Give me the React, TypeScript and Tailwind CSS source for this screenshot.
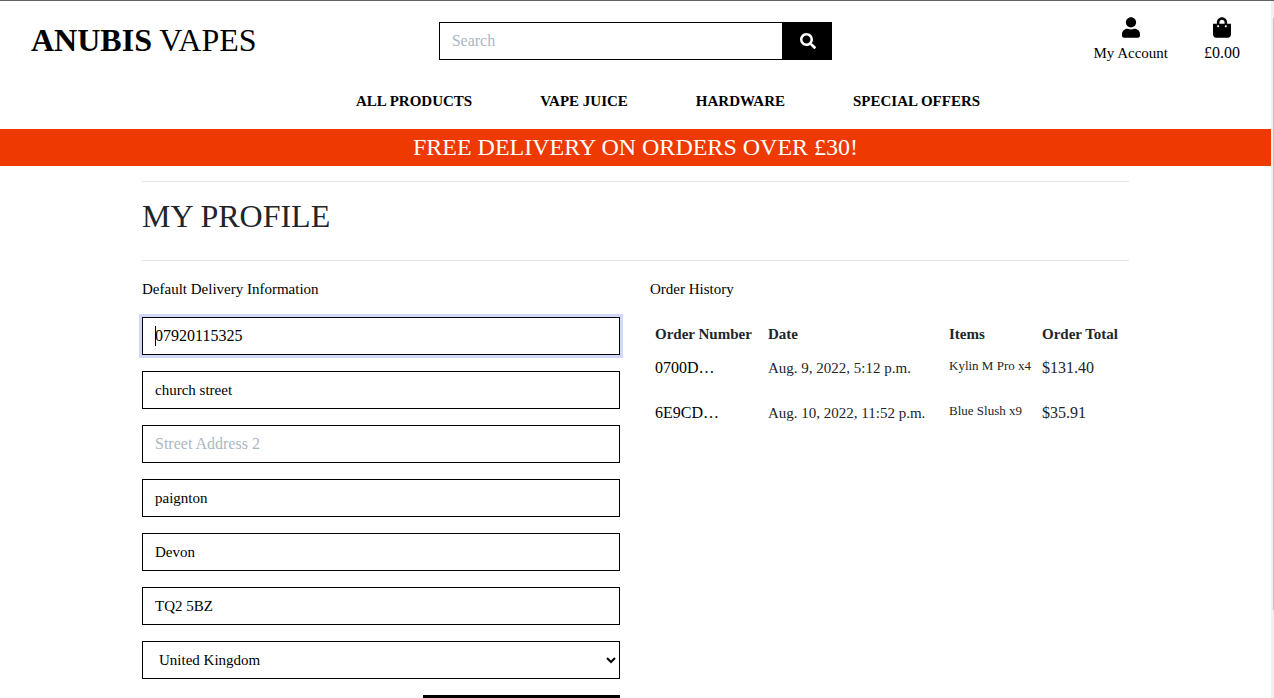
import { useState } from "react";
import { FaSearch, FaShoppingBag, FaUser } from "react-icons/fa";

const navLinks = ["All Products", "Vape Juice", "Hardware", "Special Offers"];

const fields = [
  { id: "street1", label: "Street Address 1", value: "church street" },
  { id: "street2", label: "Street Address 2", value: "" },
  { id: "town", label: "Town or City", value: "paignton" },
  { id: "county", label: "County", value: "Devon" },
  { id: "postcode", label: "Postal Code", value: "TQ2 5BZ" },
];

const orders = [
  { number: "0700D…", date: "Aug. 9, 2022, 5:12 p.m.", items: "Kylin M Pro x4", total: "$131.40" },
  { number: "6E9CD…", date: "Aug. 10, 2022, 11:52 p.m.", items: "Blue Slush x9", total: "$35.91" },
];

function Field({ id, label, value }: { id: string; label: string; value: string }) {
  const [text, setText] = useState(value);
  return (
    <input
      id={id}
      aria-label={label}
      placeholder={label}
      value={text}
      onChange={(e) => setText(e.target.value)}
      className="h-[38px] w-full border border-black bg-white px-3 text-[15px] text-black outline-none placeholder:text-base placeholder:text-[#aab7c4] focus:ring-3 focus:ring-[#d0d9fb]"
    />
  );
}

function Header() {
  return (
    <header>
      <div className="grid h-[85px] grid-cols-3 items-start">
        <a href="#home" className="pt-[21px] pl-[31px] text-[32px] leading-9 text-black">
          <strong>ANUBIS</strong> VAPES
        </a>
        <form className="flex px-[15px] pt-[21px]" onSubmit={(e) => e.preventDefault()}>
          <input
            type="search"
            aria-label="Search"
            placeholder="Search"
            className="h-[38px] min-w-0 flex-1 border border-black px-3 outline-none placeholder:text-[#aab7c4]"
          />
          <button type="submit" aria-label="Submit search" className="flex h-[38px] w-[49px] items-center justify-center bg-black text-white">
            <FaSearch size={16} />
          </button>
        </form>
        <div className="flex justify-end gap-9 pt-4 pr-[31px] text-black">
          <a href="#account" className="flex flex-col items-center gap-[3px]">
            <FaUser className="h-[21px] w-[18px]" />
            <span className="text-[15px] leading-6">My Account</span>
          </a>
          <a href="#bag" className="flex flex-col items-center gap-[3px]">
            <FaShoppingBag className="h-[21px] w-[18px]" />
            <span className="leading-6">£0.00</span>
          </a>
        </div>
      </div>
      <nav className="flex h-[43px] justify-center gap-[68px] pt-[3px] pl-[65px] text-[15px] font-bold text-black uppercase">
        {navLinks.map((link) => (
          <a key={link} href="#products" className="leading-6">
            {link}
          </a>
        ))}
      </nav>
      <p className="bg-[#ee3900] pb-px text-center text-2xl leading-9 text-white uppercase">
        Free delivery on orders over £30!
      </p>
    </header>
  );
}

function DeliveryForm() {
  const [phone, setPhone] = useState("07920115325");
  return (
    <section>
      <h2 className="text-[15px] leading-6 text-black">Default Delivery Information</h2>
      <form className="mt-4 flex flex-col gap-4" onSubmit={(e) => e.preventDefault()}>
        <div className="relative">
          <input
            id="phone"
            aria-label="Phone Number"
            value={phone}
            onChange={(e) => setPhone(e.target.value)}
            className="block h-[38px] w-full border border-black bg-white px-3 text-black caret-transparent ring-3 ring-[#d0d9fb] outline-none"
          />
          <span className="absolute top-[9px] left-[13px] h-5 w-px bg-black" />
        </div>
        {fields.map((f) => (
          <Field key={f.id} {...f} />
        ))}
        <select aria-label="Country" defaultValue="GB" className="h-[38px] w-full border border-black bg-white px-3 text-[15px] text-black">
          <option value="GB">United Kingdom</option>
          <option value="IE">Ireland</option>
        </select>
        <button type="submit" className="h-[38px] w-[197px] self-end bg-black text-[15px] text-white">
          UPDATE INFORMATION
        </button>
      </form>
    </section>
  );
}

function OrderHistory() {
  return (
    <section>
      <h2 className="text-[15px] leading-6 text-black">Order History</h2>
      <table className="mt-4 w-full table-fixed text-left whitespace-nowrap text-[#212529]">
        <thead className="text-[15px] leading-6">
          <tr>
            <th className="w-[113px] p-[5px]">Order Number</th>
            <th className="w-[181px] p-[5px]">Date</th>
            <th className="w-[93px] p-[5px]">Items</th>
            <th className="p-[5px]">Order Total</th>
          </tr>
        </thead>
        <tbody>
          {orders.map((o) => (
            <tr key={o.number} className="h-[45px] align-top">
              <td className="p-[5px]">
                <a href="#order" className="text-black">{o.number}</a>
              </td>
              <td className="p-[5px] text-[15px] leading-6">{o.date}</td>
              <td className="p-[5px] text-[13px] leading-5">{o.items}</td>
              <td className="p-[5px]">{o.total}</td>
            </tr>
          ))}
        </tbody>
      </table>
    </section>
  );
}

export default function App() {
  return (
    <div className="flex h-screen flex-col overflow-hidden border-t border-[#636363] bg-white font-['Liberation_Serif','Times_New_Roman',serif] text-base">
      <div className="flex min-h-0 flex-1">
        <div className="min-w-0 flex-1 overflow-hidden">
          <Header />
          <main className="mx-auto max-w-[987px] pt-[15px]">
            <h1 className="border-y border-[#e5e5e5] pt-[14px] pb-6 text-[32px] leading-10 text-[#212529]">MY PROFILE</h1>
            <div className="grid grid-cols-[478fr_479fr] gap-[30px] pt-4">
              <DeliveryForm />
              <OrderHistory />
            </div>
          </main>
        </div>
        <div className="flex w-[3px] flex-col items-end bg-[#f0f0f0] pt-[17px]" aria-hidden="true">
          <div className="h-[87%] w-px bg-[#c1c1c1]" />
        </div>
      </div>
    </div>
  );
}
